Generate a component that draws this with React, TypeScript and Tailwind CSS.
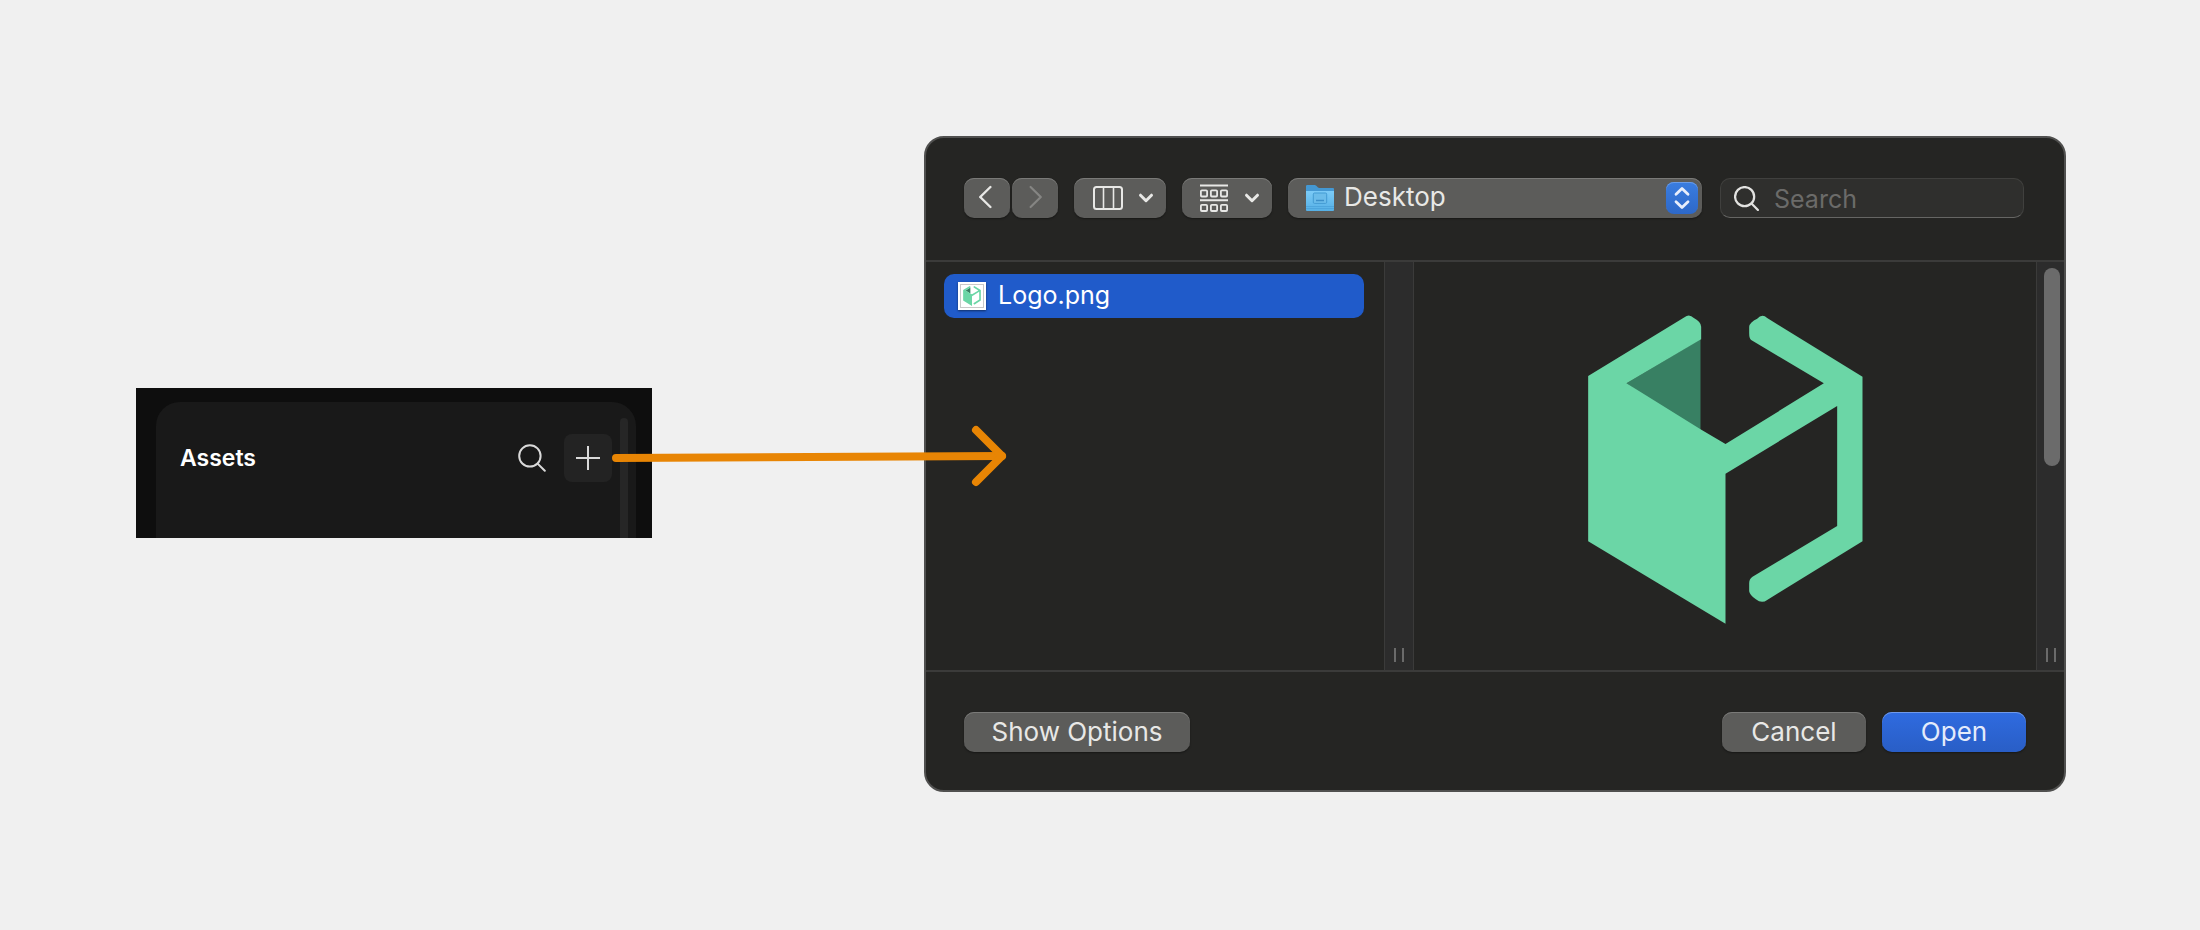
import { useState } from 'react'

const TOOL_BUTTON = 'flex h-10 items-center justify-center rounded-[10px] bg-[#5c5c5a] text-[#e8e8e6] shadow-[inset_0_1px_0_#7a7a78,0_1px_2px_rgba(0,0,0,0.4)]'

function LogoMark({ className }: { className: string }) {
  return (
    <svg viewBox="113 75 824 930" className={className} aria-hidden="true">
      <path d="M228 280L450 148V420L400 400Z" fill="#388063" />
      <path d="M113 258L402 82Q416 70 430 84Q452 96 452 110V148L228 280L450 418L525 462L820 280L602 150Q596 146 596 130V110Q598 96 620 86Q635 70 650 84L936 260V754L650 930Q634 942 616 928Q598 916 596 904V880Q596 866 606 860L860 708V348L525 551V1001L113 754Z" fill="#6bd6a6" />
    </svg>
  )
}

function FolderIcon() {
  return (
    <svg viewBox="0 0 30 28" className="h-7 w-[30px]" aria-hidden="true">
      <defs>
        <linearGradient id="folder-front" x1="0" y1="0" x2="0" y2="1">
          <stop offset="0" stopColor="#7ccbf7" />
          <stop offset="1" stopColor="#55b0e6" />
        </linearGradient>
      </defs>
      <path d="M1 2.2Q1 1 2.2 1H9.5Q10.5 1 11.3 1.8L13 3.6Q13.5 4 14.2 4H28Q29 4 29 5V12H1Z" fill="#4498d3" />
      <path d="M1 7H29V26Q29 27 28 27H2Q1 27 1 26Z" fill="url(#folder-front)" />
      <path d="M1 22.5H29M1 24.5H29" stroke="#489fd8" strokeWidth="0.7" />
      <rect x="8.3" y="9" width="13.4" height="10.4" rx="1.2" fill="#6bbcea" stroke="#439bd3" />
      <path d="M11 16.5H19" stroke="#3c8fc9" strokeWidth="1.3" />
    </svg>
  )
}

function SearchIcon({ className, strokeWidth }: { className: string; strokeWidth: number }) {
  return (
    <svg viewBox="0 0 28 28" fill="none" stroke="currentColor" strokeWidth={strokeWidth} strokeLinecap="round" className={className} aria-hidden="true">
      <circle cx="11.9" cy="11.9" r="10.7" />
      <path d="M19.6 19.6L26.8 26.8" />
    </svg>
  )
}

function ChevronDown() {
  return (
    <svg viewBox="0 0 16 10" fill="none" stroke="currentColor" strokeWidth="3" strokeLinecap="round" strokeLinejoin="round" className="h-[10px] w-4" aria-hidden="true">
      <path d="M2.5 2.2L8 7.7L13.5 2.2" />
    </svg>
  )
}

function Gutter({ children, className }: { children?: React.ReactNode; className: string }) {
  return (
    <div className={`flex shrink-0 flex-col items-center justify-between border-[#3b3b3a] bg-[#2c2c2c] pt-[6px] pb-2 ${className}`}>
      <div>{children}</div>
      <div className="flex gap-[6px]">
        <span className="h-[14px] w-[2px] bg-[#6a6a6a]" />
        <span className="h-[14px] w-[2px] bg-[#6a6a6a]" />
      </div>
    </div>
  )
}

function AssetsPanel() {
  return (
    <section className="mb-[2px] h-[150px] overflow-hidden bg-[#0e0e0e] pt-[14px] pr-4 pl-5">
      <div className="flex h-full rounded-t-3xl bg-[#191919] pr-2 pl-6">
        <div className="flex flex-1 items-center self-start pt-8">
          <h2 className="flex-1 text-[23px] font-semibold text-white">Assets</h2>
          <button aria-label="Search assets" className="mr-[18px] text-[#d9d9d9]">
            <SearchIcon className="size-7" strokeWidth={2} />
          </button>
          <button aria-label="Add asset" className="flex size-12 items-center justify-center rounded-lg bg-[#232323] text-[#d9d9d9]">
            <svg viewBox="0 0 24 24" className="size-6" stroke="currentColor" strokeWidth="2" aria-hidden="true">
              <path d="M12 0V24M0 12H24" />
            </svg>
          </button>
        </div>
        <div className="mt-4 ml-2 w-2 rounded-t-full bg-[#262626]" />
      </div>
    </section>
  )
}

// Runs from the add button on the left into the file list on the right
function Arrow() {
  return (
    <div className="relative z-10 h-16 self-center">
      <svg className="pointer-events-none absolute top-0 -left-10 h-full w-[calc(100%+118px)] overflow-visible" fill="none" stroke="#e88504" strokeWidth="8" strokeLinecap="round" strokeLinejoin="round" aria-hidden="true">
        <line x1="4" y1="26" x2="100%" y2="24" />
        <svg x="100%" overflow="visible">
          <path d="M-26 -2L0 24L-26 50" />
        </svg>
      </svg>
    </div>
  )
}

function Toolbar() {
  const [query, setQuery] = useState('')

  return (
    <header className="flex h-[124px] items-center border-b-2 border-[#3b3b3a] pr-10 pb-[2px] pl-[38px]">
      <button aria-label="Back" className={`${TOOL_BUTTON} w-[46px] pr-1`}>
        <svg viewBox="0 0 14 24" fill="none" stroke="currentColor" strokeWidth="2.4" strokeLinecap="round" strokeLinejoin="round" className="mb-[2px] h-6 w-[14px]" aria-hidden="true">
          <path d="M12.4 2L2.2 12L12.4 22" />
        </svg>
      </button>
      <button aria-label="Forward" className={`${TOOL_BUTTON} ml-[2px] w-[46px] pl-[2px]`}>
        <svg viewBox="0 0 14 24" fill="none" stroke="#858583" strokeWidth="2.2" strokeLinecap="round" strokeLinejoin="round" className="mb-[2px] h-6 w-[14px]" aria-hidden="true">
          <path d="M1.6 2L11.8 12L1.6 22" />
        </svg>
      </button>
      <button aria-label="Column view" aria-haspopup="menu" className={`${TOOL_BUTTON} ml-4 w-[92px] gap-[15px] pl-[6px]`}>
        <svg viewBox="0 0 30 24" fill="none" stroke="currentColor" strokeWidth="2" className="h-6 w-[30px]" aria-hidden="true">
          <rect x="1" y="1" width="28" height="22" rx="2.5" />
          <path d="M10.5 1V23M20.5 1V23" strokeWidth="1.6" />
        </svg>
        <ChevronDown />
      </button>
      <button aria-label="Group items" aria-haspopup="menu" className={`${TOOL_BUTTON} ml-4 w-[90px] gap-4 pl-[6px]`}>
        <svg viewBox="0 0 28 28" fill="none" stroke="currentColor" strokeWidth="1.8" className="size-7" aria-hidden="true">
          <path d="M0 1.5H28M0 16.3H28" strokeWidth="2" />
          <rect x="0.9" y="6.3" width="6.2" height="6.2" rx="1" />
          <rect x="10.9" y="6.3" width="6.2" height="6.2" rx="1" />
          <rect x="20.9" y="6.3" width="6.2" height="6.2" rx="1" />
          <rect x="0.9" y="20.8" width="6.2" height="6.2" rx="1" />
          <rect x="10.9" y="20.8" width="6.2" height="6.2" rx="1" />
          <rect x="20.9" y="20.8" width="6.2" height="6.2" rx="1" />
        </svg>
        <ChevronDown />
      </button>
      <div className="relative ml-4 flex-1">
        <select aria-label="Location" className="block h-10 w-full appearance-none rounded-[10px] bg-[#5c5c5a] pb-[2px] pl-14 text-[26px] leading-8 text-[#e8e8e6] shadow-[inset_0_1px_0_#7a7a78,0_1px_2px_rgba(0,0,0,0.4)]">
          <option>Desktop</option>
        </select>
        <span className="pointer-events-none absolute top-[6px] left-[17px]">
          <FolderIcon />
        </span>
        <span className="pointer-events-none absolute top-1 right-1 flex size-8 items-center justify-center rounded-lg bg-linear-to-b from-[#3a7de0] to-[#2d68c8] text-[#e8eefb] shadow-[inset_0_1px_0_#6a9ce8]">
          <svg viewBox="0 0 16 24" fill="none" stroke="currentColor" strokeWidth="2.8" strokeLinecap="round" strokeLinejoin="round" className="h-6 w-4" aria-hidden="true">
            <path d="M2 8.2L8 2.4L14 8.2M2 15.8L8 21.6L14 15.8" />
          </svg>
        </span>
      </div>
      <label className="ml-[18px] flex h-10 w-[304px] items-center rounded-[10px] border border-[#40403e] border-b-[#666664] bg-[#2f2f2d] pl-[13px] text-[#e2e2e0]">
        <SearchIcon className="size-[25px] shrink-0" strokeWidth={2.5} />
        <input
          type="search"
          aria-label="Search"
          value={query}
          onChange={e => setQuery(e.target.value)}
          placeholder="Search"
          className="ml-[15px] w-full min-w-0 bg-transparent pt-[2px] text-[25px] leading-8 outline-none placeholder:text-[#6b6b69]"
        />
      </label>
    </header>
  )
}

function OpenDialog() {
  return (
    <section role="dialog" aria-label="Open file" className="overflow-hidden rounded-[20px] border-2 border-[#50504f] bg-[#252523]">
      <Toolbar />
      <div className="flex h-[408px]">
        <div className="w-[458px] shrink-0 py-3 pr-5 pl-[18px]">
          <button className="flex h-11 w-full items-center gap-3 rounded-[10px] bg-[#205bca] pl-[14px] text-left text-[25px] text-white">
            <span className="flex size-7 items-center justify-center border-2 border-white bg-white shadow-[0_1px_2px_rgba(0,0,0,0.5)]">
              <span className="flex size-6 items-center justify-center border border-[#c9c9c9]">
                <LogoMark className="h-5 w-[18px]" />
              </span>
            </span>
            <span className="pb-[2px] leading-8">Logo.png</span>
          </button>
        </div>
        <Gutter className="w-[30px] border-x" />
        <div className="flex flex-1 items-center justify-center pt-2">
          <LogoMark className="h-[310px] w-[275px]" />
        </div>
        <Gutter className="w-7 border-l">
          <div className="ml-[3px] h-[198px] w-4 rounded-full bg-[#6b6b6b]" />
        </Gutter>
      </div>
      <footer className="flex h-[120px] items-center gap-4 border-t-2 border-[#3b3b3a] px-[38px] pt-[2px] text-[26px]">
        <button className={`${TOOL_BUTTON} mr-auto w-[226px] pb-[2px]`}>Show Options</button>
        <button className={`${TOOL_BUTTON} w-36 pb-[2px]`}>Cancel</button>
        <button className="flex h-10 w-36 items-center justify-center rounded-[10px] bg-linear-to-b from-[#2f6be0] to-[#295ec6] pb-[2px] text-[#e4ebfb] shadow-[inset_0_1px_0_#6f99ea,0_1px_2px_rgba(0,0,0,0.4)]">
          Open
        </button>
      </footer>
    </section>
  )
}

export default function App() {
  return (
    <main className="grid min-h-screen grid-cols-[516fr_272fr_1142fr] items-center bg-[#f0f0f0] pr-[134px] pb-[2px] pl-[136px] font-[Inter,sans-serif]">
      <AssetsPanel />
      <Arrow />
      <OpenDialog />
    </main>
  )
}
